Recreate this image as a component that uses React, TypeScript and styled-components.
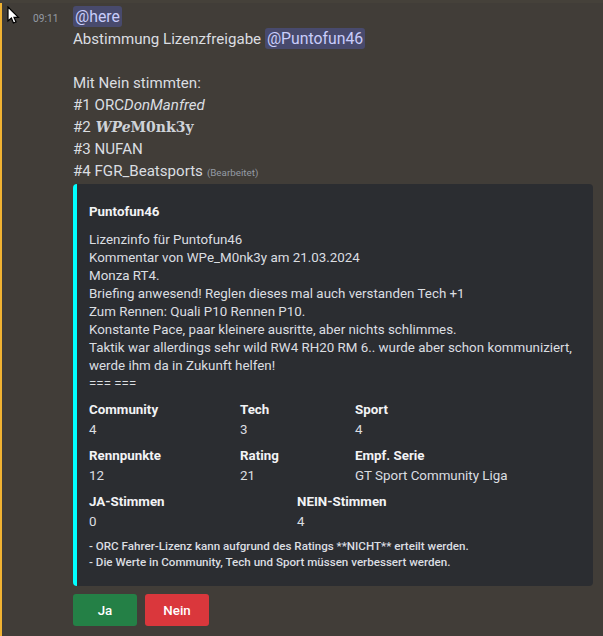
import styled, { createGlobalStyle } from 'styled-components';

const GlobalStyle = createGlobalStyle`
  html, body {
    margin: 0;
    padding: 0;
    height: 100%;
    background: #413d38;
  }
  body {
    font-family: 'Roboto', 'Noto Sans', sans-serif;
    overflow: hidden;
  }
`;

const Page = styled.div`
  position: relative;
  width: 603px;
  height: 636px;
  overflow: hidden;
  background: #413d38;
  border-top: 3px solid #45413a;
  box-sizing: border-box;
`;

const Message = styled.div`
  display: flex;
  height: 100%;
  border-left: 2px solid #f0b232;
  box-sizing: border-box;
  padding-top: 3px;
`;

const Time = styled.div`
  width: 71px;
  padding: 6px 0 0 31px;
  box-sizing: border-box;
  font-size: 10.2px;
  line-height: 14px;
  color: #949ba4;
  flex-shrink: 0;
`;

const Body = styled.div`
  flex: 1;
  min-width: 0;
  padding-right: 10px;
`;

const Line = styled.div`
  font-size: 15.1px;
  line-height: 22px;
  height: 22px;
  color: #dbdee1;
  white-space: nowrap;
`;

const Mention = styled.span`
  display: inline-block;
  font-size: 15.8px;
  line-height: 21px;
  background: #484a6d;
  color: #c9cdfb;
  border-radius: 3px;
  padding: 0 2px;
`;

const Edited = styled.span`
  font-size: 9.8px;
  color: #949ba4;
  margin-left: 4px;
`;

const Fancy = styled.span`
  font-family: 'DejaVu Serif', serif;
  font-weight: 700;
  font-size: 14px;
  line-height: 1;
  margin-left: 5px;
  color: #cfd3d8;
`;

const Embed = styled.div`
  margin-top: 2px;
  width: 520px;
  height: 402px;
  background: #2b2d31;
  border-left: 4px solid #00ffff;
  border-radius: 4px;
  box-sizing: border-box;
  padding: 19px 12px 0 12px;
  overflow: hidden;
`;

const Author = styled.div`
  font-size: 13.35px;
  line-height: 18px;
  font-weight: 700;
  color: #f2f3f5;
`;

const Description = styled.div`
  margin-top: 10px;
  font-size: 13.35px;
  line-height: 18px;
  color: #dbdee1;
  white-space: pre-line;
`;

const FieldRow = styled.div<{ $columns: string }>`
  display: grid;
  grid-template-columns: ${(p) => p.$columns};
  margin-top: 8px;
`;

const FieldName = styled.div`
  font-size: 13.35px;
  line-height: 18px;
  margin-bottom: 2px;
  font-weight: 700;
  color: #f2f3f5;
`;

const FieldValue = styled.div`
  font-size: 13.35px;
  line-height: 18px;
  color: #dbdee1;
`;

const Footer = styled.div`
  margin-top: 7px;
  font-size: 11.6px;
  line-height: 16px;
  font-weight: 500;
  color: #dbdee1;
`;

const Buttons = styled.div`
  display: flex;
  gap: 8px;
  margin-top: 8px;
`;

const ActionButton = styled.button<{ $color: string }>`
  width: 64px;
  height: 32px;
  border: none;
  border-radius: 3px;
  background: ${(p) => p.$color};
  color: #fff;
  font-family: inherit;
  font-size: 13.35px;
  font-weight: 500;
  padding: 0;
`;

const Cursor = styled.svg`
  position: absolute;
  left: 7px;
  top: 3px;
`;

const rows = [
  {
    columns: '151px 115px 1fr',
    fields: [
      ['Community', '4'],
      ['Tech', '3'],
      ['Sport', '4'],
    ],
  },
  {
    columns: '151px 115px 1fr',
    fields: [
      ['Rennpunkte', '12'],
      ['Rating', '21'],
      ['Empf. Serie', 'GT Sport Community Liga'],
    ],
  },
  {
    columns: '208px 1fr',
    fields: [
      ['JA-Stimmen', '0'],
      ['NEIN-Stimmen', '4'],
    ],
  },
];

const description = `Lizenzinfo für Puntofun46
Kommentar von WPe_M0nk3y am 21.03.2024
Monza RT4.
Briefing anwesend! Reglen dieses mal auch verstanden Tech +1
Zum Rennen: Quali P10 Rennen P10.
Konstante Pace, paar kleinere ausritte, aber nichts schlimmes.
Taktik war allerdings sehr wild RW4 RH20 RM 6.. wurde aber schon kommuniziert, werde ihm da in Zukunft helfen!
=== ===`;

function App() {
  return (
    <Page>
      <GlobalStyle />
      <Message>
        <Time>09:11</Time>
        <Body>
          <Line><Mention>@here</Mention></Line>
          <Line>Abstimmung Lizenzfreigabe <Mention>@Puntofun46</Mention></Line>
          <Line />
          <Line>Mit Nein stimmten:</Line>
          <Line>#1 ORC<i>DonManfred</i></Line>
          <Line>#2<Fancy><i>WPe</i>M0nk3y</Fancy></Line>
          <Line>#3 NUFAN</Line>
          <Line>#4 FGR_Beatsports<Edited>(Bearbeitet)</Edited></Line>
          <Embed>
            <Author>Puntofun46</Author>
            <Description>{description}</Description>
            {rows.map((row) => (
              <FieldRow key={row.fields[0][0]} $columns={row.columns}>
                {row.fields.map(([name, value]) => (
                  <div key={name}>
                    <FieldName>{name}</FieldName>
                    <FieldValue>{value}</FieldValue>
                  </div>
                ))}
              </FieldRow>
            ))}
            <Footer>
              - ORC Fahrer-Lizenz kann aufgrund des Ratings **NICHT** erteilt werden.<br />
              - Die Werte in Community, Tech und Sport müssen verbessert werden.
            </Footer>
          </Embed>
          <Buttons>
            <ActionButton $color="#248046">Ja</ActionButton>
            <ActionButton $color="#da373c">Nein</ActionButton>
          </Buttons>
        </Body>
      </Message>
      <Cursor width="14" height="22" viewBox="0 0 14 22">
        <path d="M1 1 L1 15 L4.4 12 L6.4 17 L9 16 L7 11.4 L11.4 11.4 Z" fill="#fff" stroke="#000" strokeWidth="1.2" />
      </Cursor>
    </Page>
  );
}

export default App;
